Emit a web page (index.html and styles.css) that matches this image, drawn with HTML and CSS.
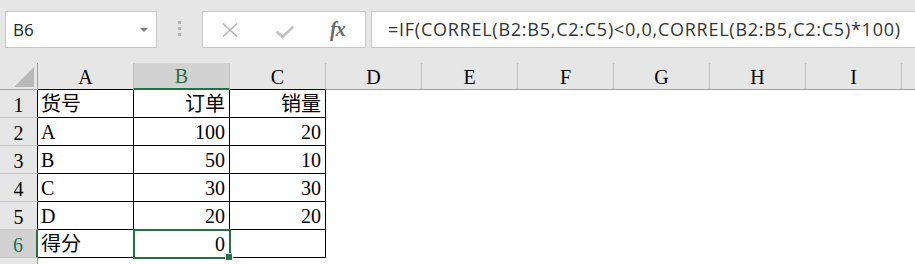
FILE: index.html
```html
<!DOCTYPE html>
<html lang="zh-CN">
<head>
  <meta charset="UTF-8">
  <title>CORREL</title>
  <link rel="stylesheet" href="styles.css">
</head>
<body>
  <div class="toolbar">
    <div class="namebox">
      <span>B6</span>
      <svg class="caret" width="8" height="4" viewBox="0 0 8 4"><path d="M0 0H8L4 4Z" fill="#7a7a7a"/></svg>
    </div>
    <div class="grip"><i></i><i></i><i></i></div>
    <div class="fxbox">
      <svg class="icon" width="18" height="16" viewBox="0 0 18 16">
        <path d="M2 1.5L16 14.5M16 1.5L2 14.5" stroke="#b4b4b4" stroke-width="1.6" fill="none"/>
      </svg>
      <svg class="icon" width="20" height="14" viewBox="0 0 20 14">
        <path d="M1.5 6.5L7.5 12L18.5 1.5" stroke="#c2c2c2" stroke-width="2.6" fill="none"/>
      </svg>
      <span class="fx">fx</span>
    </div>
    <div class="formula">=IF(CORREL(B2:B5,C2:C5)&lt;0,0,CORREL(B2:B5,C2:C5)*100)</div>
  </div>

  <div class="sheet">
    <div class="hd corner">
      <svg width="20" height="20" viewBox="0 0 20 20"><path d="M20 0V20H0Z" fill="#b9b9b9"/></svg>
    </div>
    <div class="hd col tb">A</div>
    <div class="hd col tb sel-col">B</div>
    <div class="hd col tb">C</div>
    <div class="hd col">D</div>
    <div class="hd col">E</div>
    <div class="hd col">F</div>
    <div class="hd col">G</div>
    <div class="hd col">H</div>
    <div class="hd col">I</div>
    <div class="hd col"></div>

    <div class="hd row tb">1</div>
    <div class="c t">货号</div>
    <div class="c t r">订单</div>
    <div class="c t r">销量</div>
    <div class="c blank"></div><div class="c blank"></div><div class="c blank"></div><div class="c blank"></div><div class="c blank"></div><div class="c blank"></div><div class="c blank"></div>

    <div class="hd row tb">2</div>
    <div class="c t">A</div>
    <div class="c t r">100</div>
    <div class="c t r">20</div>
    <div class="c blank"></div><div class="c blank"></div><div class="c blank"></div><div class="c blank"></div><div class="c blank"></div><div class="c blank"></div><div class="c blank"></div>

    <div class="hd row tb">3</div>
    <div class="c t">B</div>
    <div class="c t r">50</div>
    <div class="c t r">10</div>
    <div class="c blank"></div><div class="c blank"></div><div class="c blank"></div><div class="c blank"></div><div class="c blank"></div><div class="c blank"></div><div class="c blank"></div>

    <div class="hd row tb">4</div>
    <div class="c t">C</div>
    <div class="c t r">30</div>
    <div class="c t r">30</div>
    <div class="c blank"></div><div class="c blank"></div><div class="c blank"></div><div class="c blank"></div><div class="c blank"></div><div class="c blank"></div><div class="c blank"></div>

    <div class="hd row tb">5</div>
    <div class="c t">D</div>
    <div class="c t r">20</div>
    <div class="c t r">20</div>
    <div class="c blank"></div><div class="c blank"></div><div class="c blank"></div><div class="c blank"></div><div class="c blank"></div><div class="c blank"></div><div class="c blank"></div>

    <div class="hd row sel-row">6</div>
    <div class="c t">得分</div>
    <div class="c t r active">0<span class="handle"></span></div>
    <div class="c t r"></div>
    <div class="c blank"></div><div class="c blank"></div><div class="c blank"></div><div class="c blank"></div><div class="c blank"></div><div class="c blank"></div><div class="c blank"></div>

    <div class="hd row"></div>
  </div>
</body>
</html>
```

FILE: styles.css
```css
body {
  margin: 0;
  width: 915px;
  height: 264px;
  overflow: hidden;
  background-color: #fff;
}

.toolbar {
  display: flex;
  align-items: flex-start;
  height: 63px;
  padding: 11px 0 0 5px;
  box-sizing: border-box;
  background-color: #e6e6e6;
  font-family: 'Open Sans', sans-serif;
  overflow: hidden;
}

.namebox,
.fxbox,
.formula {
  height: 37px;
  box-sizing: border-box;
  border: 1px solid #c6c6c6;
  background-color: #fff;
}

.namebox {
  width: 152px;
  flex-shrink: 0;
  display: flex;
  align-items: center;
  justify-content: space-between;
  padding: 0 8px 0 7px;
  font-size: 17px;
  color: #262626;
}

.caret {
  margin-top: 1px;
}

.grip {
  width: 45px;
  flex-shrink: 0;
  display: flex;
  flex-direction: column;
  align-items: center;
  gap: 3px;
  padding-top: 10px;
}

.grip i {
  display: block;
  width: 3px;
  height: 3px;
  background-color: #b4b4b4;
}

.fxbox {
  width: 164px;
  flex-shrink: 0;
  display: flex;
  align-items: center;
  padding-left: 18px;
}

.fxbox .icon:nth-child(2) {
  margin-left: 36px;
  margin-top: 4px;
}

.fx {
  margin-left: 35px;
  font-family: 'Liberation Serif', serif;
  font-style: italic;
  font-weight: bold;
  font-size: 20px;
  color: #6a6a6a;
  letter-spacing: -1px;
}

.formula {
  flex: 1;
  margin-left: 5px;
  margin-right: -2px;
  padding-left: 16px;
  line-height: 35px;
  font-size: 18px;
  letter-spacing: 0.75px;
  color: #333;
  white-space: nowrap;
  overflow: hidden;
}

.sheet {
  display: grid;
  grid-template-columns: 38px repeat(10, 96px);
  grid-template-rows: 27px repeat(7, 28px);
  width: 915px;
  height: 201px;
  overflow: hidden;
  font-family: 'Liberation Serif', 'Noto Sans CJK SC', serif;
  font-size: 20px;
  color: #000;
}

.sheet > div {
  box-sizing: border-box;
  white-space: nowrap;
}

.hd {
  background-color: #e6e6e6;
  border-right: 1px solid #c8c8c8;
  border-bottom: 1px solid #c8c8c8;
  display: flex;
  align-items: flex-end;
  justify-content: center;
  line-height: 24px;
}

.col {
  border-bottom-color: #a0a0a0;
  border-right-color: #c0c0c0;
}

.row {
  border-right-color: #a0a0a0;
}

.corner {
  border-bottom-color: #a0a0a0;
  border-right-color: #a0a0a0;
  justify-content: flex-end;
  padding: 0 3px 2px 0;
}

.corner svg {
  display: block;
}

.col.tb {
  border-bottom-color: #000;
}

.row.tb {
  border-right-color: #000;
}

.sel-col {
  background-color: #d2d2d2;
  color: #217346;
  border-bottom: 2px solid #217346;
  line-height: 23px;
}

.sel-col.tb {
  border-bottom-color: #217346;
}

.sel-row {
  background-color: #d2d2d2;
  color: #217346;
  border-right: 2px solid #217346;
}

.c {
  display: flex;
  align-items: flex-end;
  padding: 0 4px 0 3px;
  line-height: 25px;
}

.t {
  border-right: 1px solid #000;
  border-bottom: 1px solid #000;
}

.r {
  justify-content: flex-end;
}

.active {
  position: relative;
  outline: 2px solid #217346;
  outline-offset: -1px;
}

.handle {
  position: absolute;
  right: -4px;
  bottom: -4px;
  width: 6px;
  height: 6px;
  background-color: #217346;
  border: 1px solid #fff;
}
```
